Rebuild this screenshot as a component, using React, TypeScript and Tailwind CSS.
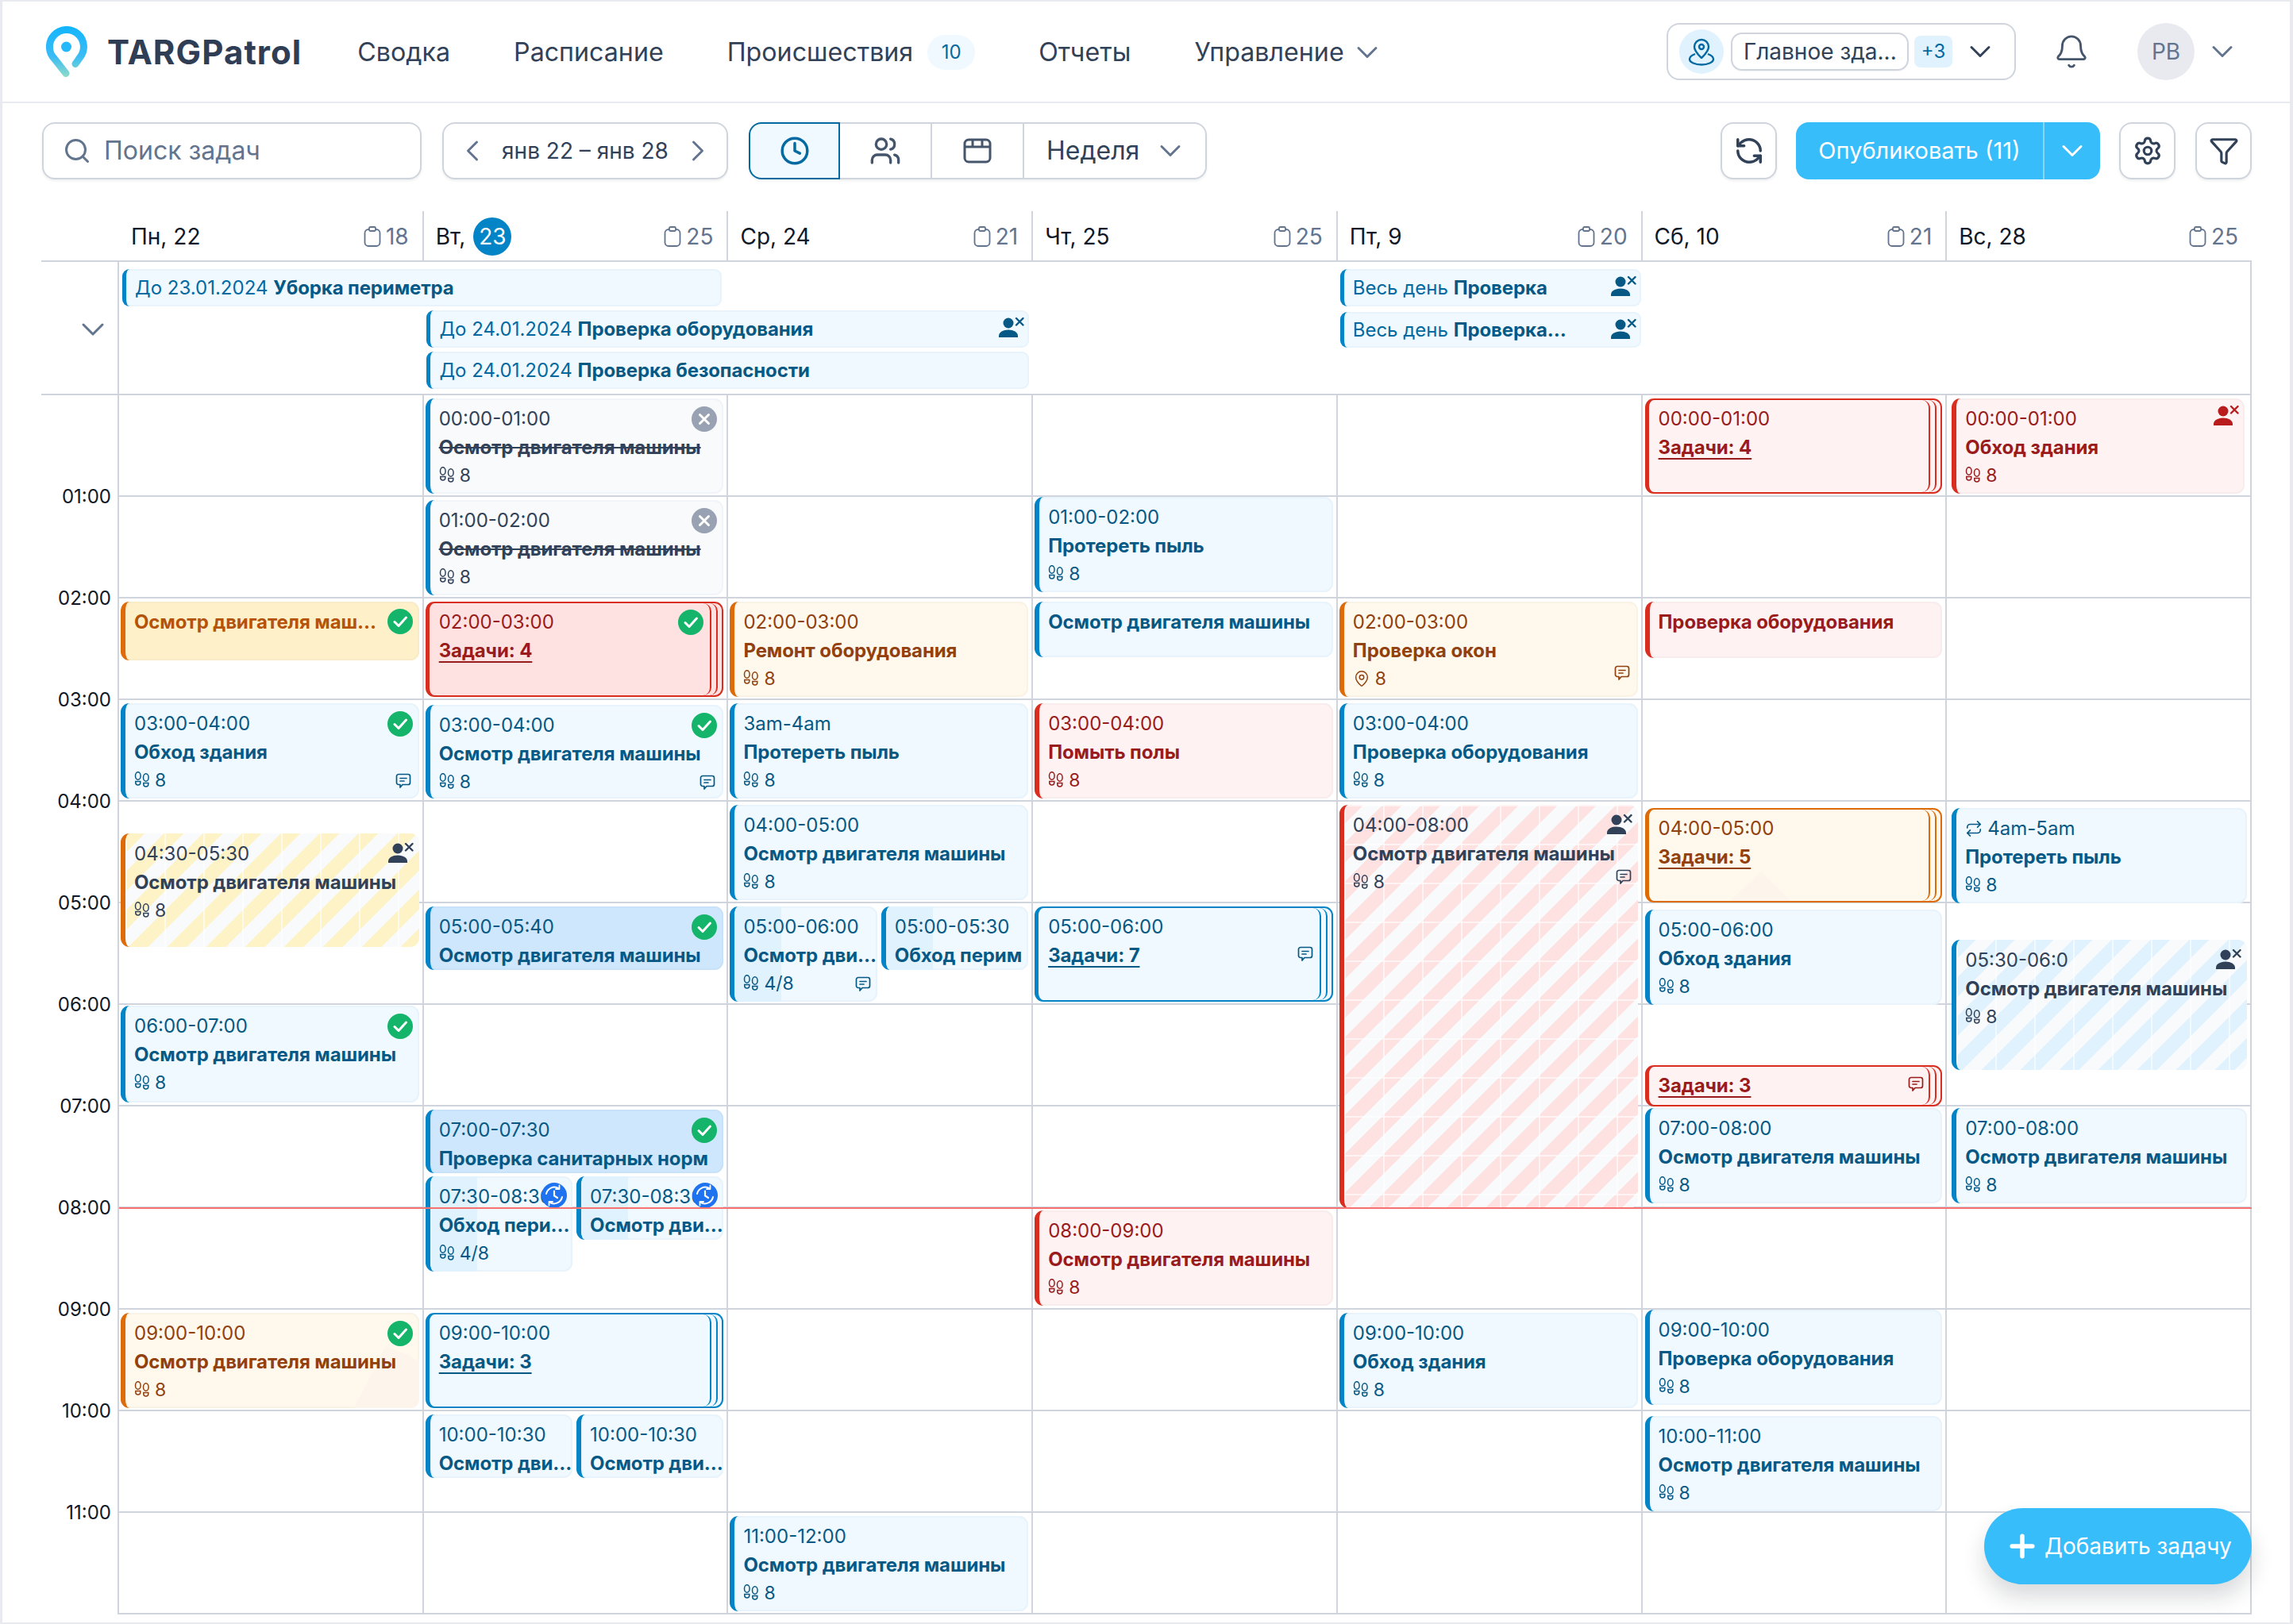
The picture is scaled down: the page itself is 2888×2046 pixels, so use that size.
import { ReactNode } from "react";
import { Bell, ChevronDown, ChevronLeft, ChevronRight, Clock, Funnel, MapPin, Plus, RefreshCcw, Repeat, Search, Settings, Users } from "lucide-react";

type Tone = "blue" | "blueStrong" | "grey" | "orange" | "orangeStrong" | "red" | "redStrong" | "stripeRed" | "stripeYellow" | "stripeBlue";

const stripeBase = "text-slate-700";
const tones: Record<Tone, { box: string; text: string; line: string }> = {
    blue: { box: "border-l-[#0284c7] bg-[#f0f9ff] shadow-[inset_0_0_0_2px_#e8f3fb]", text: "text-[#075985]", line: "border-[#0284c7]" },
    blueStrong: { box: "border-l-[#0284c7] bg-[#cfe7fc] shadow-[inset_0_0_0_2px_#c8e2f9]", text: "text-[#075985]", line: "border-[#0284c7]" },
    grey: { box: "border-l-[#0284c7] bg-[#f8fafc] shadow-[inset_0_0_0_2px_#f1f4f8]", text: "text-slate-700", line: "border-[#0284c7]" },
    orange: { box: "border-l-[#dd6b0a] bg-[#fef9ec] shadow-[inset_0_0_0_2px_#f8f3e4]", text: "text-[#92400e]", line: "border-[#dd6b0a]" },
    orangeStrong: { box: "border-l-[#dd6b0a] bg-[#fef1c9] shadow-[inset_0_0_0_2px_#f8ecc8]", text: "text-[#b45309]", line: "border-[#dd6b0a]" },
    red: { box: "border-l-[#d92d20] bg-[#fef2f2] shadow-[inset_0_0_0_2px_#f8ecec]", text: "text-[#991b1b]", line: "border-[#d92d20]" },
    redStrong: { box: "border-l-[#d92d20] bg-[#fee2e2]", text: "text-[#991b1b]", line: "border-[#d92d20]" },
    stripeRed: {
        box: "border-l-[#d92d20] [background-image:linear-gradient(to_bottom,#ffffff99_2px,transparent_2px),linear-gradient(to_right,#ffffff99_2px,transparent_2px),repeating-linear-gradient(135deg,#fee2e2_0,#fee2e2_17.32px,#f8fafc_17.32px,#f8fafc_34.64px)] [background-size:49px_49px,49px_49px,auto]",
        text: stripeBase,
        line: "border-[#d92d20]",
    },
    stripeYellow: {
        box: "border-l-[#dd6b0a] [background-image:linear-gradient(to_right,#ffffff99_2px,transparent_2px),repeating-linear-gradient(135deg,#fef3c7_0,#fef3c7_17.32px,#f8fafc_17.32px,#f8fafc_34.64px)] [background-size:49px_49px,auto]",
        text: stripeBase,
        line: "border-[#dd6b0a]",
    },
    stripeBlue: {
        box: "border-l-[#0284c7] [background-image:linear-gradient(to_right,#ffffff99_2px,transparent_2px),repeating-linear-gradient(135deg,#e0f2fe_0,#e0f2fe_17.32px,#f8fafc_17.32px,#f8fafc_34.64px)] [background-size:49px_49px,auto]",
        text: stripeBase,
        line: "border-[#0284c7]",
    },
};

const Shoes = () => (
    <svg viewBox="0 0 20 22" className="h-[22px] w-5 shrink-0" fill="none" stroke="currentColor" strokeWidth="1.5">
        <ellipse cx="4.800" cy="5.500" rx="3.300" ry="4.800" />
        <path d="M1.800 12.500h6v1.500a3 3 0 0 1-6 0z" />
        <ellipse cx="14.800" cy="7.500" rx="3.300" ry="4.800" />
        <path d="M11.800 14.500h6v1.500a3 3 0 0 1-6 0z" />
    </svg>
);

const Comment = ({ className }: { className: string }) => (
    <svg viewBox="0 0 20 20" className={`absolute h-5 w-5 ${className}`} fill="none" stroke="currentColor" strokeWidth="1.7" strokeLinejoin="round" strokeLinecap="round">
        <path d="M4 1.500h12a2.500 2.500 0 0 1 2.500 2.500v8a2.500 2.500 0 0 1-2.500 2.500h-7l-3 3.500v-3.500h-2a2.500 2.500 0 0 1-2.500-2.500v-8a2.500 2.500 0 0 1 2.500-2.500z" />
        <path d="M6 6.500h8M6 10h5" />
    </svg>
);

const UserOff = ({ className = "right-[7px] top-[11px]" }: { className?: string }) => (
    <svg viewBox="0 0 33 26" className={`absolute h-[26px] w-[33px] ${className}`} fill="currentColor">
        <circle cx="13" cy="8" r="6.500" />
        <path d="M1 26v-2c0-4.500 5.500-7.500 12-7.500s12 3 12 7.500v2z" />
        <path d="M23 2l8.500 8.500M31.500 2L23 10.500" stroke="currentColor" strokeWidth="2.400" fill="none" strokeLinecap="round" />
    </svg>
);

const CheckBadge = ({ className = "right-2 top-2.5" }: { className?: string }) => (
    <svg viewBox="0 0 32 32" className={`absolute h-8 w-8 ${className}`}>
        <circle cx="16" cy="16" r="16" fill="#14b56a" />
        <path d="M9 16.500l5 5 9.500-10.500" fill="none" stroke="#fff" strokeWidth="3" strokeLinecap="round" strokeLinejoin="round" />
    </svg>
);

const CancelBadge = () => (
    <svg viewBox="0 0 32 32" className="absolute right-2 top-2.5 h-8 w-8">
        <circle cx="16" cy="16" r="16" fill="#98a2b3" />
        <path d="M10.500 10.500l11 11M21.500 10.500l-11 11" fill="none" stroke="#fff" strokeWidth="3" strokeLinecap="round" />
    </svg>
);

const SyncBadge = () => (
    <svg viewBox="0 0 32 32" className="absolute right-[7px] top-2 h-8 w-8">
        <circle cx="16" cy="16" r="16" fill="#1f73f1" />
        <path d="M6 14a10.500 10.500 0 0 1 15.500-7M26 18a10.500 10.500 0 0 1-15.500 7" fill="none" stroke="#fff" strokeWidth="2" strokeLinecap="round" />
        <path d="M22.500 3.500v4.500h-4.500M9.500 28.500v-4.500h4.500" fill="none" stroke="#fff" strokeWidth="1.800" strokeLinecap="round" strokeLinejoin="round" />
        <path d="M16 10.500v6l4 2.500" fill="none" stroke="#fff" strokeWidth="2.200" strokeLinecap="round" />
    </svg>
);

interface CardProps {
    tone: Tone;
    time?: ReactNode;
    title: string;
    count?: string;
    className?: string;
    strike?: boolean;
    badge?: ReactNode;
    comment?: string;
    progress?: boolean;
    pin?: boolean;
    wedge?: string;
}

const Rows = ({ tone, time, title, count, strike, pin, underline }: CardProps & { underline?: boolean }) => (
    <div className={`relative ${tones[tone].text}`}>
        {time && <div className="whitespace-nowrap text-2xl leading-9">{time}</div>}
        <div className={`whitespace-nowrap text-2xl font-bold leading-9 tracking-[-0.005em] ${strike ? "line-through" : ""}`}>
            {underline ? <span className="underline decoration-2 underline-offset-[5px]">{title}</span> : title}
        </div>
        {count && (
            <div className="-mt-px flex h-9 items-center gap-[6px] text-[23px]">
                {pin ? <MapPin size={22} strokeWidth={1.6} className="shrink-0" /> : <Shoes />}
                {count}
            </div>
        )}
    </div>
);

const Card = (props: CardProps) => {
    const { tone, className = "", badge, comment, progress, wedge } = props;
    return (
        <div className={`relative min-w-0 overflow-hidden rounded-[11px] border-l-[6px] pl-[11px] pt-2 ${tones[tone].box} ${className}`}>
            {wedge && <div className={`absolute inset-0 bg-[#fdf4ec] ${wedge}`} />}
            {progress && <div className="absolute inset-y-0 left-0 w-[59px] bg-[#e0f2fe]" />}
            <Rows {...props} />
            {badge}
            {comment && <Comment className={`${tones[tone].text} ${comment}`} />}
        </div>
    );
};

const Stack = (props: CardProps & { bg: string }) => {
    const { tone, className = "", bg, badge, comment, wedge } = props;
    const line = tones[tone].line;
    return (
        <div className={`overflow-hidden rounded-[11px] border-2 border-l-[5px] ${line} ${bg} ${className}`}>
            <div className={`mr-[5px] h-full rounded-r-[10px] border-r-2 ${line}`}>
                <div className={`relative mr-[6px] h-full rounded-r-[10px] border-r-2 pl-[12px] pt-1.5 ${line}`}>
                    {wedge && <div className={`absolute inset-0 bg-[#fdf4ec] ${wedge}`} />}
                    <Rows {...props} underline />
                    {badge}
                    {comment && <Comment className={`${tones[tone].text} ${comment}`} />}
                </div>
            </div>
        </div>
    );
};

const AllDay = ({ label, title, className, user }: { label: string; title: string; className: string; user?: boolean }) => (
    <div className={`relative flex min-w-0 items-center rounded-[9px] border-l-[5px] border-l-[#0284c7] bg-[#f0f9ff] pl-[11px] text-2xl shadow-[inset_0_0_0_2px_#e8f3fb] ${className}`}>
        <span className="whitespace-nowrap text-[#0369a1]">
            {label} <span className="font-bold tracking-[-0.005em] text-[#075985]">{title}</span>
        </span>
        {user && <UserOff className="right-[6px] top-[8px] text-[#075985]" />}
    </div>
);

const Clip = () => (
    <svg viewBox="0 0 22 26" className="h-[26px] w-[22px]" fill="none" stroke="currentColor" strokeWidth="1.8">
        <rect x="1.500" y="4" width="19" height="21" rx="4.500" />
        <rect x="7" y="1" width="8" height="5" rx="1.500" fill="#fff" />
    </svg>
);

const days = [
    { name: "Пн, 22", count: "18" },
    { name: "Вт,", today: "23", count: "25" },
    { name: "Ср, 24", count: "21" },
    { name: "Чт, 25", count: "25" },
    { name: "Пт, 9", count: "20" },
    { name: "Сб, 10", count: "21" },
    { name: "Вс, 28", count: "25" },
];

const hours = ["01:00", "02:00", "03:00", "04:00", "05:00", "06:00", "07:00", "08:00", "09:00", "10:00", "11:00", ""];

const box = "rounded-2xl border-2 border-[#d0d5dd] bg-white shadow-[0_2px_3px_rgba(16,24,40,0.07)]";
const H120 = "my-1";
const engine = "Осмотр двигателя машины";
const engineShort = "Осмотр дви…";

export default function App() {
    return (
        <div className="relative h-[2046px] w-[2888px] overflow-hidden border-y-2 border-l-[3px] border-r-[4px] border-[#e8eaf0] bg-white font-[family-name:Inter,sans-serif] text-slate-700">
            {/* top bar */}
            <header className="flex h-[128px] items-center border-b-2 border-[#e8eaf0] pl-[55px] pr-[63px]">
                <svg viewBox="0 0 52 64" className="h-16 w-[52px]">
                    <defs>
                        <linearGradient id="logo" x1="0" y1="0" x2="0" y2="64" gradientUnits="userSpaceOnUse">
                            <stop offset="0" stopColor="#12b5fe" />
                            <stop offset="0.6" stopColor="#3bbcf4" />
                            <stop offset="1" stopColor="#8ddcc8" />
                        </linearGradient>
                    </defs>
                    <path d="M25 59.500L10.500 41A21.500 21.500 0 1 1 43 39L37 47.500" fill="none" stroke="url(#logo)" strokeWidth="9" strokeLinecap="round" />
                    <circle cx="25.500" cy="26" r="6.500" fill="#25b8fb" />
                </svg>
                <span className="ml-[25px] text-[42px] font-bold tracking-[0.026em] text-[#2f3d55]">TARGPatrol</span>
                <nav className="ml-[70px] mt-[2px] flex items-center gap-[80px] text-[32.2px] text-slate-700">
                    <span>Сводка</span>
                    <span>Расписание</span>
                    <span className="flex items-center gap-[18px]">
                        Происшествия
                        <span className="flex h-11 w-[60px] items-center justify-center rounded-full bg-[#f0f9ff] text-2xl text-[#0369a1]">10</span>
                    </span>
                    <span>Отчеты</span>
                    <span className="flex items-center gap-[7px]">
                        Управление
                        <ChevronDown size={44} strokeWidth={1.6} className="text-slate-500" />
                    </span>
                </nav>
                <div className="ml-auto flex h-[72px] w-[440px] items-center rounded-2xl border-2 border-[#d0d5dd] pl-[14px]">
                    <span className="flex h-14 w-14 items-center justify-center rounded-full bg-[#e0f2fe] text-[#0369a1]">
                        <svg viewBox="0 0 34 36" className="h-9 w-[34px]" fill="none" stroke="currentColor" strokeWidth="2.400" strokeLinejoin="round">
                            <path d="M17 26c-4-4-9-8.500-9-14a9 9 0 0 1 18 0c0 5.500-5 10-9 14z" />
                            <circle cx="17" cy="12" r="3" />
                            <path d="M9 21c-4 1.500-7 3.300-7 6.500C2 31.500 9 34.500 17 34.500s15-3 15-7c0-3.200-3-5-7-6.500" />
                        </svg>
                    </span>
                    <span className="ml-[9px] flex h-12 w-[224px] items-center rounded-[14px] border-2 border-[#d0d5dd] pl-[14px] text-[28px] text-slate-700 shadow-[0_1px_2px_rgba(16,24,40,0.06)]">Главное зда...</span>
                    <span className="ml-[7px] flex h-10 w-12 items-center justify-center rounded-lg bg-[#e0f2fe] text-2xl text-[#0369a1]">+3</span>
                    <ChevronDown size={44} strokeWidth={1.6} className="ml-[13px] text-slate-700" />
                </div>
                <Bell size={46} strokeWidth={1.5} className="ml-[47px] text-slate-600" />
                <span className="ml-[60px] flex h-[72px] w-[72px] items-center justify-center rounded-full bg-[#e9eaf0] text-[28px] text-slate-500">РВ</span>
                <ChevronDown size={44} strokeWidth={1.6} className="ml-[13px] text-slate-500" />
            </header>

            <div className="pl-[49px] pr-[48px]">
                {/* toolbar */}
                <div className="mt-6 flex h-[72px] pl-px text-[32px]">
                    <div className={`flex w-[478px] items-center ${box}`}>
                        <Search size={36} strokeWidth={2} className="ml-6 text-slate-500" />
                        <span className="ml-[16px] text-slate-500">Поиск задач</span>
                    </div>
                    <div className={`ml-[26px] flex w-[360px] items-center justify-between px-[14px] text-[28px] ${box}`}>
                        <ChevronLeft size={44} strokeWidth={1.6} className="text-slate-500" />
                        <span className="text-slate-700">янв 22 – янв 28</span>
                        <ChevronRight size={44} strokeWidth={1.6} className="text-slate-500" />
                    </div>
                    <div className="ml-[26px] flex rounded-2xl shadow-[0_2px_3px_rgba(16,24,40,0.07)]">
                        <div className="flex w-[115px] items-center justify-center rounded-l-2xl border-2 border-[#0369a1] bg-[#f0f9ff]">
                            <Clock size={38} strokeWidth={2.2} className="text-[#0369a1]" />
                        </div>
                        <div className="flex w-[116px] items-center justify-center border-y-2 border-r-2 border-[#d0d5dd]">
                            <Users size={40} strokeWidth={2} className="text-slate-600" />
                        </div>
                        <div className="flex w-[116px] items-center justify-center border-y-2 border-r-2 border-[#d0d5dd]">
                            <svg viewBox="0 0 36 32" className="h-8 w-9 text-slate-600" fill="none" stroke="currentColor" strokeWidth="3">
                                <rect x="2" y="2" width="32" height="28" rx="5" />
                                <path d="M2 11h32M12 2v8M24 2v8" />
                            </svg>
                        </div>
                        <div className="flex w-[230px] items-center justify-between rounded-r-2xl border-y-2 border-r-2 border-[#d0d5dd] pl-7 pr-[22px] text-slate-700">
                            Неделя
                            <ChevronDown size={44} strokeWidth={1.6} className="text-slate-500" />
                        </div>
                    </div>
                    <div className={`ml-auto flex w-[71px] items-center justify-center ${box}`}>
                        <RefreshCcw size={38} strokeWidth={2.2} className="text-slate-700" />
                    </div>
                    <div className="ml-[24px] flex w-[383px] overflow-hidden rounded-2xl bg-[#38bdfb] text-[29px] text-white">
                        <span className="flex flex-1 items-center justify-center border-r-2 border-white/40">Опубликовать (11)</span>
                        <span className="flex w-[70px] items-center justify-center">
                            <ChevronDown size={44} strokeWidth={1.6} />
                        </span>
                    </div>
                    <div className={`ml-[24px] flex w-[71px] items-center justify-center ${box}`}>
                        <Settings size={38} strokeWidth={2} className="text-slate-700" />
                    </div>
                    <div className={`ml-[25px] flex w-[71px] items-center justify-center ${box}`}>
                        <Funnel size={38} strokeWidth={2} className="text-slate-700" />
                    </div>
                </div>

                {/* day heads */}
                <div className="mt-10 grid h-16 grid-cols-[98px_repeat(7,minmax(0,1fr))] border-b-2 border-[#d0d5dd]">
                    <div />
                    {days.map((d, i) => (
                        <div key={d.name} className={`flex items-center justify-between pl-[15px] pr-[17px] pt-[2px] text-[28px] text-gray-900 ${i < 6 ? "border-r-2 border-[#d0d5dd]" : ""}`}>
                            <span className="flex items-center gap-[10px] leading-none">
                                {d.name}
                                {d.today && <span className="flex h-12 w-12 items-center justify-center rounded-full bg-[#0284c7] text-white">{d.today}</span>}
                            </span>
                            <span className="flex items-center gap-[6px] text-slate-500">
                                <Clip />
                                {d.count}
                            </span>
                        </div>
                    ))}
                </div>

                {/* all-day tasks */}
                <div className="flex h-[168px] border-b-2 border-r-2 border-[#d0d5dd]">
                    <div className="flex w-[96px] items-center justify-end pr-[7px] pt-[4px]">
                        <ChevronDown size={48} strokeWidth={1.5} className="text-slate-500" />
                    </div>
                    <div className="grid flex-1 grid-cols-[repeat(7,minmax(0,1fr))] grid-rows-[repeat(3,47px)] gap-y-[5px] border-l-2 border-[#d0d5dd] pt-[9px]">
                        <AllDay label="До 23.01.2024" title="Уборка периметра" className="col-span-2 col-start-1 row-start-1 ml-1 mr-2" />
                        <AllDay label="Весь день" title="Проверка" className="col-start-5 row-start-1 ml-1" user />
                        <AllDay label="До 24.01.2024" title="Проверка оборудования" className="col-span-2 col-start-2 row-start-2 ml-1 mr-1" user />
                        <AllDay label="Весь день" title="Проверка…" className="col-start-5 row-start-2 ml-1 mt-[2px]" user />
                        <AllDay label="До 24.01.2024" title="Проверка безопасности" className="col-span-2 col-start-2 row-start-3 ml-1 mr-1" />
                    </div>
                </div>

                {/* hours */}
                <div className="relative flex">
                    <div className="w-[96px]">
                        {hours.map((h) => (
                            <div key={h} className="flex h-32 items-end justify-end pr-2 text-2xl text-gray-900">
                                <span className="translate-y-1/2 leading-none">{h}</span>
                            </div>
                        ))}
                    </div>
                    <div className="relative grid flex-1 border-l-2 border-[#d0d5dd]">
                        <div className="grid grid-cols-[repeat(7,minmax(0,1fr))] [grid-area:1/1]">
                            {Array.from({ length: 84 }, (_, i) => (
                                <div key={i} className="h-32 border-b-2 border-r-2 border-[#d0d5dd]" />
                            ))}
                        </div>
                        <div className="grid grid-cols-[repeat(7,minmax(0,1fr))] grid-rows-[repeat(24,64px)] [grid-area:1/1] [&>*]:ml-[2px] [&>*]:mr-[6px]">
                            {/* Пн */}
                            <Card tone="orangeStrong" title="Осмотр двигателя маш…" className="col-start-1 row-start-5 row-span-2 mt-1 h-[74px] self-start" badge={<CheckBadge className="right-2 top-[9px]" />} />
                            <Card tone="blue" time="03:00-04:00" title="Обход здания" count="8" className={`col-start-1 row-start-7 row-span-2 ${H120}`} badge={<CheckBadge />} comment="right-2.5 top-[88px]" />
                            <Card tone="stripeYellow" time="04:30-05:30" title={engine} count="8" className="col-start-1 row-start-9 row-span-4 mt-[40px] h-[143px] self-start" badge={<UserOff />} />
                            <Card tone="blue" time="06:00-07:00" title={engine} count="8" className="col-start-1 row-start-13 row-span-2 mt-[1px] h-[122px] self-start" badge={<CheckBadge />} />
                            <Card tone="orange" time="09:00-10:00" title={engine} count="8" className={`col-start-1 row-start-19 row-span-2 ${H120}`} badge={<CheckBadge />} wedge="[clip-path:polygon(288px_120px,328px_41px,372px_61px,372px_120px)]" />

                            {/* Вт */}
                            <Card tone="grey" time="00:00-01:00" title={engine} count="8" strike className={`col-start-2 row-start-1 row-span-2 ${H120}`} badge={<CancelBadge />} />
                            <Card tone="grey" time="01:00-02:00" title={engine} count="8" strike className={`col-start-2 row-start-3 row-span-2 ${H120}`} badge={<CancelBadge />} />
                            <Stack tone="red" bg="bg-[#fee2e2]" time="02:00-03:00" title="Задачи: 4" className={`col-start-2 row-start-5 row-span-2 ${H120}`} badge={<CheckBadge className="right-2 top-2" />} />
                            <Card tone="blue" time="03:00-04:00" title={engine} count="8" className="col-start-2 row-start-7 row-span-2 mb-1 mt-[6px]" badge={<CheckBadge />} comment="right-2.5 top-[88px]" />
                            <Card tone="blueStrong" time="05:00-05:40" title={engine} className="col-start-2 row-start-11 row-span-2 mt-1 h-20 self-start" badge={<CheckBadge />} />
                            <div className="col-start-2 row-start-15 row-span-4 mt-1 flex min-w-0 flex-col gap-1">
                                <Card tone="blueStrong" time="07:00-07:30" title="Проверка санитарных норм" className="h-20 shrink-0" badge={<CheckBadge />} />
                                <div className="flex items-start gap-[5px]">
                                    <Card tone="blue" time="07:30-08:30" title="Обход пери…" count="4/8" progress className="h-[120px] flex-1" badge={<SyncBadge />} />
                                    <Card tone="blue" time="07:30-08:30" title={engineShort} progress className="h-20 flex-1" badge={<SyncBadge />} />
                                </div>
                            </div>
                            <Stack tone="blue" bg="bg-[#f0f9ff]" time="09:00-10:00" title="Задачи: 3" className={`col-start-2 row-start-19 row-span-2 ${H120}`} />
                            <div className="col-start-2 row-start-21 row-span-2 mt-1 flex min-w-0 items-start gap-[5px]">
                                <Card tone="blue" time="10:00-10:30" title={engineShort} className="h-20 flex-1" />
                                <Card tone="blue" time="10:00-10:30" title={engineShort} className="h-20 flex-1" />
                            </div>

                            {/* Ср */}
                            <Card tone="orange" time="02:00-03:00" title="Ремонт оборудования" count="8" className={`col-start-3 row-start-5 row-span-2 ${H120}`} />
                            <Card tone="blue" time="3am-4am" title="Протереть пыль" count="8" className={`col-start-3 row-start-7 row-span-2 ${H120}`} />
                            <Card tone="blue" time="04:00-05:00" title={engine} count="8" className={`col-start-3 row-start-9 row-span-2 ${H120}`} />
                            <div className="col-start-3 row-start-11 row-span-2 mt-1 flex min-w-0 items-start gap-[5px]">
                                <Card tone="blue" time="05:00-06:00" title={engineShort} count="4/8" progress className="h-[120px] flex-1" comment="right-2 top-[88px]" />
                                <Card tone="blue" time="05:00-05:30" title="Обход перим" progress className="h-20 flex-1" />
                            </div>
                            <Card tone="blue" time="11:00-12:00" title={engine} count="8" className={`col-start-3 row-start-23 row-span-2 ${H120}`} />

                            {/* Чт */}
                            <Card tone="blue" time="01:00-02:00" title="Протереть пыль" count="8" className="col-start-4 row-start-3 row-span-2 mb-2" />
                            <Card tone="blue" title={engine} className="col-start-4 row-start-5 row-span-2 mt-1 h-[70px] self-start" />
                            <Card tone="red" time="03:00-04:00" title="Помыть полы" count="8" className={`col-start-4 row-start-7 row-span-2 ${H120}`} />
                            <Stack tone="blue" bg="bg-[#f0f9ff]" time="05:00-06:00" title="Задачи: 7" className={`col-start-4 row-start-11 row-span-2 ${H120}`} comment="right-2 top-[48px]" />
                            <Card tone="red" time="08:00-09:00" title={engine} count="8" className={`col-start-4 row-start-17 row-span-2 mb-[5px] mt-[3px]`} />

                            {/* Пт */}
                            <Card tone="orange" time="02:00-03:00" title="Проверка окон" count="8" pin className={`col-start-5 row-start-5 row-span-2 ${H120}`} comment="right-2.5 top-[80px]" />
                            <Card tone="blue" time="03:00-04:00" title="Проверка оборудования" count="8" className={`col-start-5 row-start-7 row-span-2 ${H120}`} />
                            <Card tone="stripeRed" time="04:00-08:00" title={engine} count="8" className="col-start-5 row-start-9 row-span-8 mt-1" badge={<UserOff />} comment="right-2 top-[81px]" />
                            <Card tone="blue" time="09:00-10:00" title="Обход здания" count="8" className={`col-start-5 row-start-19 row-span-2 ${H120}`} />

                            {/* Сб */}
                            <Stack tone="red" bg="bg-[#fef2f2]" time="00:00-01:00" title="Задачи: 4" className={`col-start-6 row-start-1 row-span-2 !ml-[3px] ${H120}`} />
                            <Card tone="red" title="Проверка оборудования" className="col-start-6 row-start-5 row-span-2 !ml-[3px] mt-1 h-[71px] self-start" />
                            <Stack tone="orange" bg="bg-[#fef9ec]" time="04:00-05:00" title="Задачи: 5" className="col-start-6 row-start-9 row-span-2 !ml-[3px] mb-0 mt-2 h-[119px] self-start" wedge="[clip-path:polygon(100px_117px,142px_78px,180px_117px)]" />
                            <Card tone="blue" time="05:00-06:00" title="Обход здания" count="8" className="col-start-6 row-start-11 row-span-2 !ml-[3px] mt-2" />
                            <Stack tone="red" bg="bg-[#fef2f2]" title="Задачи: 3" className="col-start-6 row-start-13 row-span-4 !ml-[3px] mt-[76px] h-[52px] self-start" comment="right-1.5 top-[12px]" />
                            <Card tone="blue" time="07:00-08:00" title={engine} count="8" className="col-start-6 row-start-15 row-span-2 !ml-[3px] mb-[6px] mt-[2px]" />
                            <Card tone="blue" time="09:00-10:00" title="Проверка оборудования" count="8" className="col-start-6 row-start-19 row-span-2 !ml-[3px] mb-2" />
                            <Card tone="blue" time="10:00-11:00" title={engine} count="8" className="col-start-6 row-start-21 row-span-2 !ml-[3px] mb-[2px] mt-[6px]" />

                            {/* Вс */}
                            <Card tone="red" time="00:00-01:00" title="Обход здания" count="8" className={`col-start-7 row-start-1 row-span-2 !ml-[6px] !mr-[9px] ${H120}`} badge={<UserOff className="right-[7px] top-2 text-[#b91c1c]" />} />
                            <Card
                                tone="blue"
                                time={
                                    <span className="flex items-center gap-[6px]">
                                        <Repeat size={22} strokeWidth={1.8} />
                                        4am-5am
                                    </span>
                                }
                                title="Протереть пыль"
                                count="8"
                                className="col-start-7 row-start-9 row-span-2 !ml-[6px] mt-2"
                            />
                            <Card tone="stripeBlue" time="05:30-06:0" title={engine} count="8" className="col-start-7 row-start-11 row-span-4 !ml-[6px] mt-[46px] h-[164px] self-start" badge={<UserOff />} />
                            <Card tone="blue" time="07:00-08:00" title={engine} count="8" className="col-start-7 row-start-15 row-span-2 !ml-[6px] mb-[6px] mt-[2px]" />
                        </div>
                        {/* now line */}
                        <div className="absolute inset-x-0 top-[1023px] z-10 h-[2px] bg-[#f87171]" />
                    </div>
                    <button className="absolute right-0 top-[1402px] z-20 flex h-24 w-[337px] items-center gap-[6px] rounded-full bg-[#38bdfb] pl-[26px] text-[28px] text-white shadow-[0_16px_28px_rgba(16,24,40,0.16)]">
                        <Plus size={44} strokeWidth={3} />
                        Добавить задачу
                    </button>
                </div>
            </div>
        </div>
    );
}
